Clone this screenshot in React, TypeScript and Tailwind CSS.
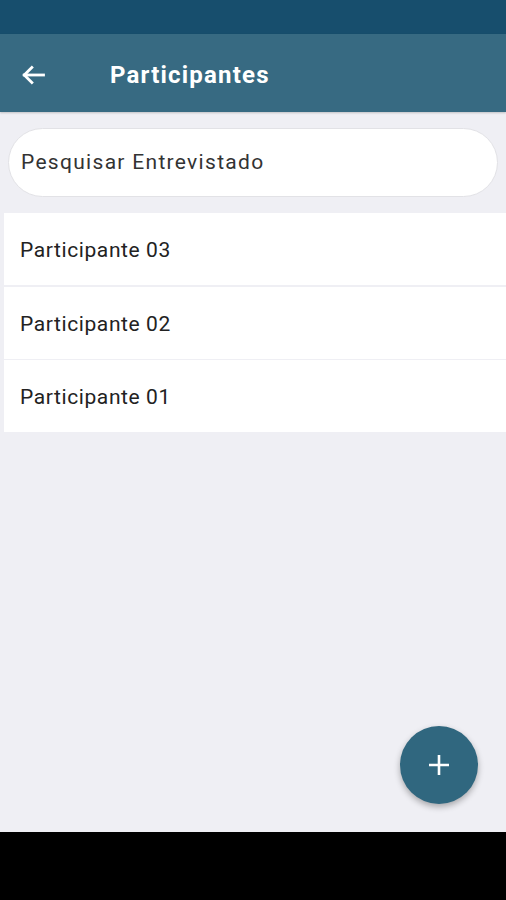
import React from 'react';

const participants = ['Participante 03', 'Participante 02', 'Participante 01'];

function App() {
  return (
    <div className="w-[506px] h-[900px] flex flex-col bg-[#efeff4] font-['Roboto',sans-serif] overflow-hidden">
      {/* Status bar */}
      <div className="h-[34px] bg-[#174e6d] shrink-0" />

      {/* App bar */}
      <header className="h-[78px] bg-[#376a82] flex items-center pt-1 shrink-0 shadow-[0_1px_2px_rgba(0,0,0,0.2)]">
        <button className="w-[66px] h-full flex items-center justify-center pr-[1px] text-white">
          <svg width="28" height="28" viewBox="0 0 24 24" fill="none" stroke="white" strokeWidth="2.4" strokeLinecap="square">
            <path d="M21 12H4.5" />
            <path d="M11 5.5L4.5 12l6.5 6.5" />
          </svg>
        </button>
        <h1 className="ml-[44px] text-white text-[24px] font-bold tracking-[1.2px]">Participantes</h1>
      </header>

      <main className="relative flex-1 flex flex-col">
        {/* Search */}
        <div className="px-2 pt-4 pb-4">
          <div className="h-[69px] bg-white rounded-full border border-[#e2e2e6] flex items-center px-3">
            <span className="text-[21px] text-[#333] tracking-[1.3px]">Pesquisar Entrevistado</span>
          </div>
        </div>

        {/* List */}
        <ul className="ml-1 flex flex-col gap-[1.5px]">
          {participants.map((p) => (
            <li key={p} className="h-[72px] bg-white flex items-center pl-4 pt-1 text-[21px] text-[#222] tracking-[0.6px]">
              {p}
            </li>
          ))}
        </ul>

        {/* FAB */}
        <button className="absolute right-[28px] bottom-[28px] w-[78px] h-[78px] rounded-full bg-[#30677f] flex items-center justify-center shadow-[0_3px_6px_rgba(0,0,0,0.3)]">
          <svg width="24" height="24" viewBox="0 0 24 24" stroke="white" strokeWidth="2.6">
            <path d="M12 2v20M2 12h20" />
          </svg>
        </button>
      </main>

      {/* Navigation bar */}
      <div className="h-[68px] bg-black shrink-0" />
    </div>
  );
}

export default App;
